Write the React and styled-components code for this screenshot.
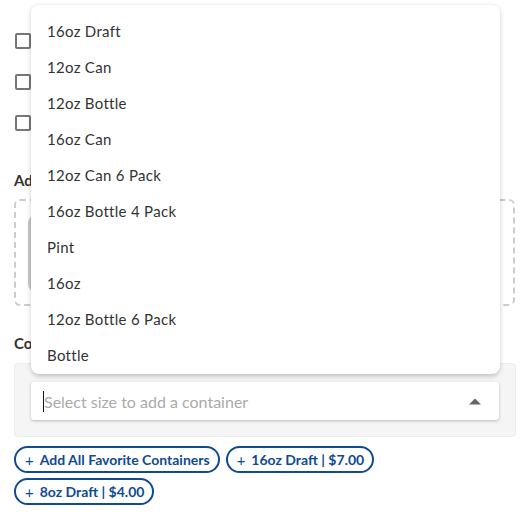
import React from "react";
import styled, { createGlobalStyle } from "styled-components";

const GlobalStyle = createGlobalStyle`
  body {
    margin: 0;
    background: #ffffff;
    font-family: "Lato", "Liberation Sans", sans-serif;
    color: #333333;
  }
`;

const sizes = [
  "16oz Draft",
  "12oz Can",
  "12oz Bottle",
  "16oz Can",
  "12oz Can 6 Pack",
  "16oz Bottle 4 Pack",
  "Pint",
  "16oz",
  "12oz Bottle 6 Pack",
  "Bottle",
];

const pills = [
  "Add All Favorite Containers",
  "16oz Draft | $7.00",
  "8oz Draft | $4.00",
];

const App = () => {
  return (
    <Page>
      <GlobalStyle />
      <CheckList>
        {[0, 1, 2].map((i) => (
          <CheckRow key={i}>
            <Box />
          </CheckRow>
        ))}
      </CheckList>

      <Heading>Ad</Heading>
      <DropZone>
        <ImageCard />
      </DropZone>

      <Heading>Co</Heading>
      <Panel>
        <SelectWrap>
          <Menu>
            {sizes.map((s) => (
              <MenuItem key={s}>{s}</MenuItem>
            ))}
          </Menu>
          <Select>
            <Caret />
            <Placeholder>Select size to add a container</Placeholder>
            <svg width="12" height="7" viewBox="0 0 12 7">
              <path d="M0 6.5 L6 0.5 L12 6.5 Z" fill="#666666" />
            </svg>
          </Select>
        </SelectWrap>
      </Panel>

      <Pills>
        {pills.map((p) => (
          <Pill key={p}>
            <span className="plus">+</span>
            {p}
          </Pill>
        ))}
      </Pills>
    </Page>
  );
};

const Page = styled.div`
  padding: 20px 16px 20px 14px;
  width: 502px;
`;

const CheckList = styled.div`
  display: flex;
  flex-direction: column;
`;

const CheckRow = styled.div`
  height: 41px;
  display: flex;
  align-items: center;
  padding-left: 1px;
`;

const Box = styled.div`
  width: 16px;
  height: 16px;
  box-sizing: border-box;
  border: 2px solid #767676;
  border-radius: 2px;
  flex-shrink: 0;
`;

const Heading = styled.div`
  font-size: 15px;
  font-weight: 700;
  line-height: 20px;
  color: #333333;
  margin-top: 27px;
  margin-bottom: 9px;
`;

const DropZone = styled.div`
  height: 107px;
  box-sizing: border-box;
  border: 2px dashed #cccccc;
  border-radius: 6px;
  padding: 14px 12px 12px;
  width: 501px;
`;

const ImageCard = styled.div`
  width: 120px;
  height: 77px;
  box-sizing: border-box;
  border: 3px solid #c8c8c8;
  border-radius: 8px;
`;

const Panel = styled.div`
  margin-top: 10px;
  height: 74px;
  box-sizing: border-box;
  background: #f5f5f5;
  border: 1px solid #ececec;
  border-radius: 4px;
  padding: 18px 16px 0;
`;

const SelectWrap = styled.div`
  position: relative;
`;

const Select = styled.div`
  height: 38px;
  box-sizing: border-box;
  background: #ffffff;
  border-radius: 3px;
  box-shadow: 0 1px 3px rgba(0, 0, 0, 0.25);
  display: flex;
  align-items: center;
  padding: 0 18px 0 12px;
  svg {
    margin-left: auto;
  }
`;

const Caret = styled.div`
  width: 1px;
  height: 21px;
  background: #111;
`;

const Placeholder = styled.span`
  font-size: 16px;
  color: #aaaaaa;
`;

const Menu = styled.div`
  position: absolute;
  left: 0;
  right: -1px;
  bottom: calc(100% + 8px);
  height: 369px;
  box-sizing: border-box;
  padding-top: 8px;
  background: #ffffff;
  border-radius: 8px;
  box-shadow: 0 1px 5px rgba(0, 0, 0, 0.2), 0 6px 4px -2px rgba(0, 0, 0, 0.06);
  overflow: hidden;
  z-index: 2;
`;

const MenuItem = styled.div`
  height: 36px;
  display: flex;
  align-items: center;
  padding-left: 16px;
  font-size: 15px;
  letter-spacing: 0.3px;
  color: #333333;
`;

const Pills = styled.div`
  margin-top: 9px;
  display: flex;
  flex-wrap: wrap;
  gap: 5px 6px;
`;

const Pill = styled.button`
  height: 27px;
  box-sizing: border-box;
  border: 2px solid #0f4a95;
  border-radius: 14px;
  background: #ffffff;
  color: #0f4a95;
  font-family: "Lato", "Liberation Sans", sans-serif;
  font-weight: 700;
  font-size: 14px;
  padding: 0 8px 0 9px;
  display: flex;
  align-items: center;
  .plus {
    font-weight: 400;
    font-size: 15px;
    margin-right: 6px;
  }
`;

export default App;
